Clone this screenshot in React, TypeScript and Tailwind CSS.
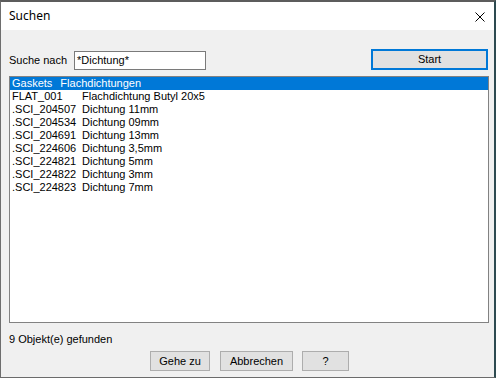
import React from "react";

const rows: [string, string][] = [
  ["FLAT_001", "Flachdichtung Butyl 20x5"],
  [".SCI_204507", "Dichtung 11mm"],
  [".SCI_204534", "Dichtung 09mm"],
  [".SCI_204691", "Dichtung 13mm"],
  [".SCI_224606", "Dichtung 3,5mm"],
  [".SCI_224821", "Dichtung 5mm"],
  [".SCI_224822", "Dichtung 3mm"],
  [".SCI_224823", "Dichtung 7mm"],
];

export default function App() {
  return (
    <div className="w-[496px] h-[379px] bg-white overflow-hidden" style={{ fontFamily: '"Liberation Sans", Arial, sans-serif' }}>
      <div className="w-[496px] h-[378px] flex flex-col border-l border-l-[#6e6e6e] border-t-2 border-t-[#5c5c5c] border-r-2 border-r-[#2d4a50] border-b border-b-[#6b6b6b]">
        {/* Title bar */}
        <div className="h-[28px] bg-white flex items-center justify-between pl-[8px] pr-[9px]">
          <span className="text-[12px] text-black leading-none -mt-[1px]" style={{ fontFamily: '"Noto Sans", "Open Sans", sans-serif' }}>Suchen</span>
          <svg width="10" height="10" viewBox="0 0 10 10" className="mt-[1px]">
            <path d="M0.5 0.5 L9.5 9.5 M9.5 0.5 L0.5 9.5" stroke="#000" strokeWidth="1" fill="none" />
          </svg>
        </div>
        {/* Body */}
        <div className="flex-1 bg-[#f0f0f0] flex flex-col pl-[8px] pr-[5px] text-[11px] text-black">
          <div className="flex items-start mt-[19px] h-[21px]">
            <span className="w-[65px] mt-[5px] leading-[13px]">Suche nach</span>
            <div className="mt-[2px] w-[132px] h-[19px] bg-white border border-[#7a7a7a] flex items-center px-[2px] leading-none">*Dichtung*</div>
            <div className="ml-auto w-[117px] h-[21px] bg-[#e1e1e1] border-2 border-[#0078d7] flex items-center justify-center leading-none mr-[1px]">Start</div>
          </div>
          <div className="mt-[6px] w-[480px] h-[247px] bg-white border border-[#828282] flex flex-col">
            <div className="h-[13px] bg-[#0078d7] text-white flex items-center pl-[2px] leading-[13px]">
              <span>Gaskets</span>
              <span className="ml-[8px]">Flachdichtungen</span>
            </div>
            {rows.map(([a, b]) => (
              <div key={a} className="h-[13px] flex items-center pl-[2px] leading-[13px]">
                <span className="w-[70px]">{a}</span>
                <span>{b}</span>
              </div>
            ))}
          </div>
          <div className="mt-[10px] leading-[13px]">9 Objekt(e) gefunden</div>
          <div className="mt-[5px] flex items-start">
            <div className="ml-[141px] w-[60px] h-[20px] bg-[#e1e1e1] border border-[#adadad] flex items-center justify-center leading-none">Gehe zu</div>
            <div className="ml-[10px] w-[73px] h-[20px] bg-[#e1e1e1] border border-[#adadad] flex items-center justify-center leading-none">Abbrechen</div>
            <div className="ml-[9px] w-[47px] h-[20px] bg-[#e1e1e1] border border-[#adadad] flex items-center justify-center leading-none">?</div>
          </div>
        </div>
      </div>
    </div>
  );
}
